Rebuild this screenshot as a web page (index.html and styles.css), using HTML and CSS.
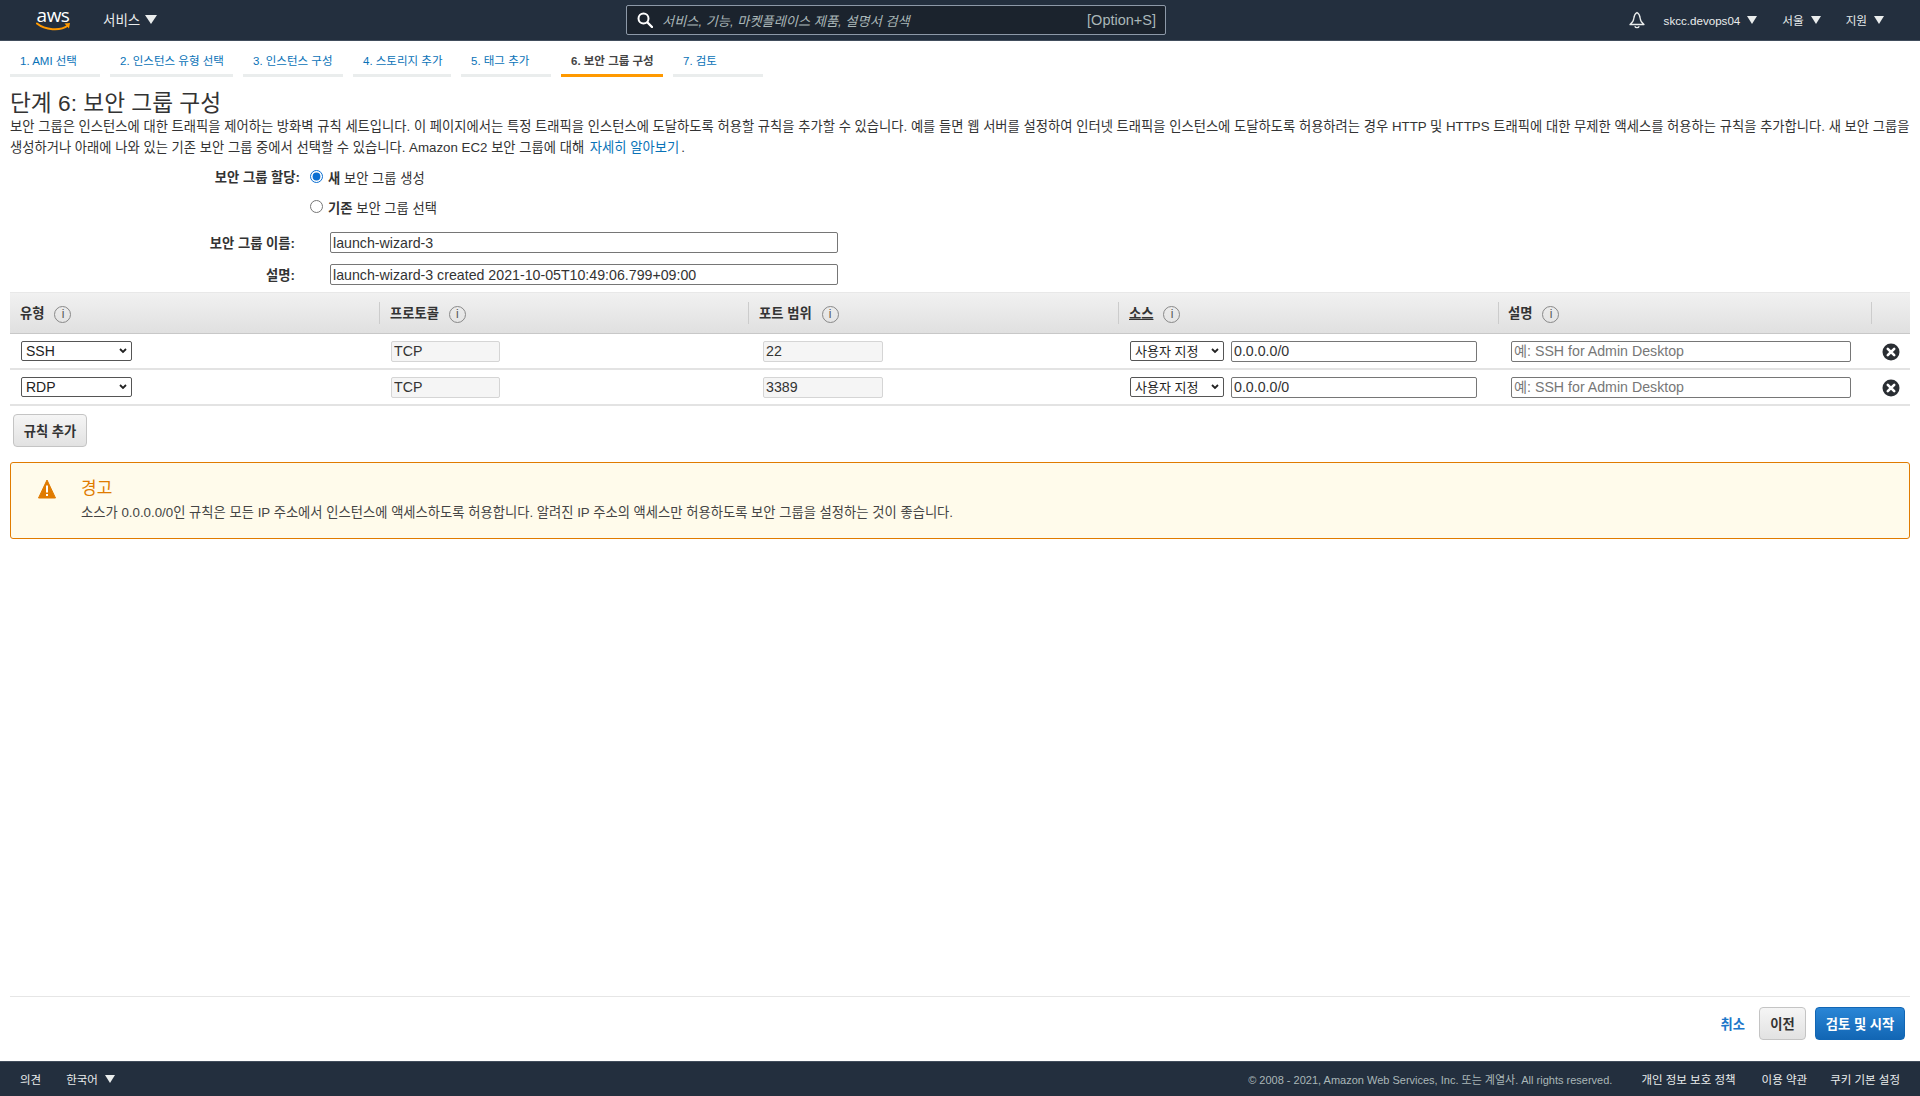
FILE: index.html
```html
<!DOCTYPE html>
<html lang="ko">
<head>
<meta charset="utf-8">
<title>EC2 인스턴스 시작</title>
<link rel="stylesheet" href="styles.css">
</head>
<body>
<header class="topbar">
  <div class="top-left">
    <div class="logo">
      <span class="logo-text">aws</span>
      <svg class="logo-smile" width="36" height="10" viewBox="0 0 36 10"><path d="M1 1.500C9 8 24 9.500 32 3.500" fill="none" stroke="#ff9900" stroke-width="2" stroke-linecap="round"/><path d="M28.500 1.500L34 1L33 6.500Z" fill="#ff9900"/></svg>
    </div>
    <span class="nav-item nav-services">서비스<i class="caret caret-lg"></i></span>
  </div>
  <div class="search">
    <svg class="search-icon" width="16" height="16" viewBox="0 0 16 16"><circle cx="6.500" cy="6.500" r="5" fill="none" stroke="#fff" stroke-width="2"/><path d="M10.500 10.500L15 15" stroke="#fff" stroke-width="2.400" stroke-linecap="round"/></svg>
    <span class="search-text">서비스, 기능, 마켓플레이스 제품, 설명서 검색</span>
    <span class="search-key">[Option+S]</span>
  </div>
  <div class="top-right">
    <svg class="bell" width="18" height="18" viewBox="0 0 18 18"><path d="M9 1.500C6.500 3 6 5 5.800 7.500C5.600 10 4 12 2 13.500H16C14 12 12.400 10 12.200 7.500C12 5 11.500 3 9 1.500Z" fill="none" stroke="#eaeded" stroke-width="1.300" stroke-linejoin="round"/><path d="M6.800 15.200a2.300 2 0 0 0 4.400 0" fill="none" stroke="#eaeded" stroke-width="1.300"/></svg>
    <span class="nav-item nav-account">skcc.devops04<i class="caret"></i></span>
    <span class="nav-item nav-region">서울<i class="caret"></i></span>
    <span class="nav-item">지원<i class="caret"></i></span>
  </div>
</header>

<nav class="tabs">
  <a class="tab">1. AMI 선택</a>
  <a class="tab tab-xl">2. 인스턴스 유형 선택</a>
  <a class="tab tab-wide">3. 인스턴스 구성</a>
  <a class="tab tab-storage">4. 스토리지 추가</a>
  <a class="tab">5. 태그 추가</a>
  <a class="tab tab-active">6. 보안 그룹 구성</a>
  <a class="tab">7. 검토</a>
</nav>

<main class="content">
  <h1 class="title">단계 6: 보안 그룹 구성</h1>
  <p class="intro">보안 그룹은 인스턴스에 대한 트래픽을 제어하는 방화벽 규칙 세트입니다. 이 페이지에서는 특정 트래픽을 인스턴스에 도달하도록 허용할 규칙을 추가할 수 있습니다. 예를 들면 웹 서버를 설정하여 인터넷 트래픽을 인스턴스에 도달하도록 허용하려는 경우 HTTP 및 HTTPS 트래픽에 대한 무제한 액세스를 허용하는 규칙을 추가합니다. 새 보안 그룹을 생성하거나 아래에 나와 있는 기존 보안 그룹 중에서 선택할 수 있습니다. Amazon EC2 보안 그룹에 대해 <a class="link">자세히 알아보기</a>.</p>

  <div class="assign">
    <div class="assign-label">보안 그룹 할당:</div>
    <div class="assign-options">
      <label class="radio-row"><input type="radio" name="sg" class="radio" checked><span><b>새</b> 보안 그룹 생성</span></label>
      <label class="radio-row"><input type="radio" name="sg" class="radio"><span><b>기존</b> 보안 그룹 선택</span></label>
    </div>
  </div>

  <div class="field">
    <label class="field-label">보안 그룹 이름:</label>
    <input class="input field-input" value="launch-wizard-3">
  </div>
  <div class="field field-second">
    <label class="field-label">설명:</label>
    <input class="input field-input" value="launch-wizard-3 created 2021-10-05T10:49:06.799+09:00">
  </div>

  <table class="rules">
    <colgroup>
      <col class="c1"><col class="c2"><col class="c3"><col class="c4"><col class="c5"><col class="c6">
    </colgroup>
    <thead>
      <tr>
        <th>유형<i class="info">i</i></th>
        <th class="th-shift">프로토콜<i class="info">i</i></th>
        <th class="th-shift">포트 범위<i class="info">i</i></th>
        <th class="th-shift"><span class="underlined">소스</span><i class="info">i</i></th>
        <th>설명<i class="info">i</i></th>
        <th></th>
      </tr>
    </thead>
    <tbody>
      <tr>
        <td class="cell-type"><select class="select select-type"><option>SSH</option></select></td>
        <td class="cell-proto"><input class="input input-ro input-proto" value="TCP" readonly></td>
        <td class="cell-port"><input class="input input-ro input-port" value="22" readonly></td>
        <td class="cell-source"><select class="select select-source"><option>사용자 지정</option></select><input class="input input-cidr" value="0.0.0.0/0"></td>
        <td class="cell-desc"><input class="input input-desc" placeholder="예: SSH for Admin Desktop"></td>
        <td class="cell-del"><svg class="del" width="18" height="18" viewBox="0 0 18 18"><circle cx="9" cy="9" r="8.500" fill="#2a2e33"/><path d="M5.800 5.800L12.200 12.200M12.200 5.800L5.800 12.200" stroke="#fff" stroke-width="2.600" stroke-linecap="round"/></svg></td>
      </tr>
      <tr>
        <td class="cell-type"><select class="select select-type"><option>RDP</option></select></td>
        <td class="cell-proto"><input class="input input-ro input-proto" value="TCP" readonly></td>
        <td class="cell-port"><input class="input input-ro input-port" value="3389" readonly></td>
        <td class="cell-source"><select class="select select-source"><option>사용자 지정</option></select><input class="input input-cidr" value="0.0.0.0/0"></td>
        <td class="cell-desc"><input class="input input-desc" placeholder="예: SSH for Admin Desktop"></td>
        <td class="cell-del"><svg class="del" width="18" height="18" viewBox="0 0 18 18"><circle cx="9" cy="9" r="8.500" fill="#2a2e33"/><path d="M5.800 5.800L12.200 12.200M12.200 5.800L5.800 12.200" stroke="#fff" stroke-width="2.600" stroke-linecap="round"/></svg></td>
      </tr>
    </tbody>
  </table>

  <button class="btn btn-add">규칙 추가</button>

  <section class="warning">
    <svg class="warn-icon" width="20" height="20" viewBox="0 0 20 20"><path d="M10 1L18.500 19H1.500Z" fill="#e07b00" stroke="#e07b00" stroke-linejoin="round"/><rect x="9" y="6.500" width="2" height="7" fill="#fff"/><rect x="9" y="15" width="2" height="2" fill="#fff"/></svg>
    <div>
      <div class="warn-title">경고</div>
      <div class="warn-text">소스가 0.0.0.0/0인 규칙은 모든 IP 주소에서 인스턴스에 액세스하도록 허용합니다. 알려진 IP 주소의 액세스만 허용하도록 보안 그룹을 설정하는 것이 좋습니다.</div>
    </div>
  </section>
</main>

<div class="actions">
  <a class="cancel">취소</a>
  <button class="btn btn-prev">이전</button>
  <button class="btn btn-primary">검토 및 시작</button>
</div>

<footer class="footer">
  <div class="foot-left">
    <span>의견</span>
    <span>한국어<i class="caret"></i></span>
  </div>
  <div class="foot-right">
    <span class="copyright">© 2008 - 2021, Amazon Web Services, Inc. 또는 계열사. All rights reserved.</span>
    <span>개인 정보 보호 정책</span>
    <span>이용 약관</span>
    <span class="foot-last">쿠키 기본 설정</span>
  </div>
</footer>
</body>
</html>
```

FILE: styles.css
```css
* { box-sizing: border-box; }
html, body { height: 100%; }
body {
  margin: 0;
  height: 1096px;
  display: flex;
  flex-direction: column;
  background: #fff;
  color: #333;
  font-family: "Liberation Sans", "Noto Sans CJK KR", sans-serif;
  font-size: 13.300px;
  overflow: hidden;
}

/* top bar */
.topbar {
  height: 41px;
  flex: none;
  display: grid;
  grid-template-columns: 626px 540px 1fr;
  align-items: center;
  background: #232f3e;
  border-bottom: 1px solid #414d5c;
  color: #eaeded;
}
.top-left { display: flex; align-items: center; }
.logo { width: 34px; margin-left: 36px; position: relative; height: 30px; }
.logo-text {
  display: block;
  font-family: "Open Sans", sans-serif;
  font-size: 19px;
  line-height: 20px;
  color: #fff;
  text-align: center;
  letter-spacing: -0.500px;
}
.logo-smile { position: absolute; left: 0; top: 17px; }
.nav-item { display: inline-flex; align-items: center; }
.nav-services { margin: 0 0 2px 33px; font-size: 13.500px; }
.caret {
  display: inline-block;
  width: 0;
  height: 0;
  margin-left: 7px;
  border-left: 5px solid transparent;
  border-right: 5px solid transparent;
  border-top: 8px solid #eaeded;
}
.caret-lg { margin-left: 5px; border-left-width: 6px; border-right-width: 6px; border-top-width: 9px; }
.search {
  height: 30px;
  display: flex;
  align-items: center;
  padding: 0 9px 0 10px;
  background: #1b232d;
  border: 1px solid #8d99a8;
  border-radius: 2px;
}
.search-icon { flex: none; }
.search-text { margin-left: 9px; flex: 1; font-style: italic; color: #aab7b8; font-size: 13.200px; }
.search-key { color: #aab7b8; font-size: 14.500px; }
.top-right {
  display: flex;
  align-items: center;
  justify-content: flex-end;
  padding-right: 36px;
  gap: 20px;
  font-size: 11.600px;
}
.nav-account { margin-right: 5px; }
.nav-region { margin-right: 5px; }
.bell { margin-right: -2px; }

/* wizard tabs */
.tabs {
  flex: none;
  display: flex;
  gap: 10px;
  padding: 0 10px;
}
.tab {
  width: 90px;
  height: 36px;
  padding: 12px 0 0 10px;
  border-bottom: 3px solid #eaeded;
  color: #0972b7;
  font-size: 11.500px;
  line-height: 16px;
  white-space: nowrap;
}
.tab-wide { width: 100px; }
.tab-storage { width: 98px; }
.tab-xl { width: 123px; }
.tab-active { width: 102px; color: #444; font-weight: 700; border-bottom-color: #ff9900; }

/* content */
.content { flex: 1; padding: 0 10px; min-height: 0; }
.title {
  margin: 14px 0 0;
  font-size: 22.700px;
  line-height: 25px;
  font-weight: 400;
  color: #333;
}
.intro { margin: 0; font-size: 13.300px; line-height: 21px; color: #333; }
.link { margin: 0 2px; color: #0972b7; }
.assign { display: flex; margin-top: 4px; }
.assign-label { width: 290px; padding-top: 1px; text-align: right; font-weight: 700; line-height: 30px; }
.assign-options { padding-left: 10px; }
.radio-row { display: flex; align-items: center; height: 30px; }
.radio { margin: 0 5px 2px 0; width: 13px; height: 13px; accent-color: #0a6ed1; }
.field { display: flex; align-items: center; margin-top: 10px; }
.field-second { margin-top: 11px; }
.field-label { width: 285px; text-align: right; font-weight: 700; }
.input {
  height: 21px;
  padding: 0 2px;
  border: 1px solid #767676;
  border-radius: 2px;
  background: #fff;
  color: #333;
  font-family: inherit;
  font-size: 14.200px;
  outline: none;
}
.field-input { margin-left: 35px; width: 508px; }
.input::placeholder { color: #777; }

/* rules table */
.rules {
  width: 100%;
  margin-top: 7px;
  border-collapse: separate;
  border-spacing: 0;
  table-layout: fixed;
}
.c1, .c2 { width: 369px; }
.c3 { width: 370px; }
.c4 { width: 380px; }
.c5 { width: 373px; }
.rules th {
  height: 42px;
  padding: 0 0 0 10px;
  text-align: left;
  font-size: 13.300px;
  color: #333;
  background: linear-gradient(#f1f1f1, #e0e0e0);
  border-top: 1px solid #e8e8e8;
  border-bottom: 1px solid #c8c8c8;
  position: relative;
}
.rules .th-shift { padding-left: 11px; }
.rules th + th::before {
  content: "";
  position: absolute;
  left: 0;
  top: 9px;
  bottom: 9px;
  width: 1px;
  background: #ccc;
}
.underlined { text-decoration: underline; }
.info {
  display: inline-block;
  width: 17px;
  height: 17px;
  margin-left: 10px;
  border: 1px solid #888;
  border-radius: 50%;
  font-style: normal;
  font-weight: 400;
  font-size: 12px;
  line-height: 15px;
  text-align: center;
  vertical-align: middle;
  color: #555;
}
.rules td { height: 36px; padding: 0; border-bottom: 2px solid #e3e3e3; }
.select {
  appearance: none;
  height: 20px;
  padding: 0 0 0 4px;
  border: 1px solid #555;
  border-radius: 2px;
  color: #222;
  font-family: inherit;
  font-size: 14px;
  background: #fff url("data:image/svg+xml,%3Csvg xmlns='http://www.w3.org/2000/svg' width='8' height='6'%3E%3Cpath d='M1 1l3 3 3-3' fill='none' stroke='%23222' stroke-width='1.800'/%3E%3C/svg%3E") no-repeat right 4px center;
}
.select-type { margin-left: 11px; width: 111px; }
.input-ro { background: #f5f5f5; border-color: #d5d5d5; }
.cell-proto { padding-left: 12px !important; }
.input-proto { width: 109px; }
.cell-port { padding-left: 15px !important; }
.input-port { width: 120px; }
.cell-source { padding-left: 12px !important; white-space: nowrap; }
.select-source { width: 94px; font-size: 13px; vertical-align: middle; }
.input-cidr { width: 246px; margin-left: 7px; vertical-align: middle; }
.cell-desc { padding-left: 13px !important; }
.input-desc { width: 340px; }
.cell-del { text-align: center; }
.del { vertical-align: middle; position: relative; top: 1px; }

/* buttons */
.btn {
  font-family: inherit;
  font-size: 13.300px;
  font-weight: 700;
  border-radius: 4px;
  cursor: pointer;
}
.btn-add {
  display: block;
  width: 74px;
  height: 33px;
  margin: 8px 0 0 3px;
  padding: 0;
  color: #333;
  background: linear-gradient(#f5f5f5, #e2e2e2);
  border: 1px solid #c4c4c4;
}

/* warning */
.warning {
  display: flex;
  height: 77px;
  margin-top: 15px;
  padding: 16px 0 0 26px;
  background: #fffbeb;
  border: 1px solid #e07b00;
  border-radius: 3px;
}
.warn-icon { flex: none; margin-right: 24px; }
.warn-title { font-size: 17px; line-height: 20px; color: #e07b00; }
.warn-text { margin-top: 4px; font-size: 13.300px; line-height: 20px; color: #444; }

/* bottom actions */
.actions {
  flex: none;
  display: flex;
  align-items: center;
  justify-content: flex-end;
  gap: 14px;
  height: 65px;
  margin: 0 10px;
  padding: 10px 5px 21px 0;
  border-top: 1px solid #e6e6e6;
}
.cancel { color: #1b76c9; font-weight: 700; font-size: 13.300px; }
.btn-prev {
  width: 47px;
  height: 33px;
  margin-right: -5px;
  color: #333;
  background: linear-gradient(#f5f5f5, #e2e2e2);
  border: 1px solid #c4c4c4;
}
.btn-primary {
  width: 90px;
  height: 33px;
  color: #fff;
  background: linear-gradient(#2a86d6, #1266b4);
  border: 1px solid #1266b4;
}

/* footer */
.footer {
  flex: none;
  height: 35px;
  display: flex;
  align-items: center;
  justify-content: space-between;
  padding: 0 20px;
  background: #232f3e;
  border-top: 1px solid #414d5c;
  color: #eaeded;
  font-size: 11.500px;
}
.foot-left { display: flex; align-items: center; gap: 25px; }
.foot-left span { display: inline-flex; align-items: center; }
.foot-right { display: flex; align-items: center; gap: 26px; }
.foot-last { margin-left: -3px; }
.copyright { color: #aab7b8; font-size: 11px; margin-right: 3px; }
```
